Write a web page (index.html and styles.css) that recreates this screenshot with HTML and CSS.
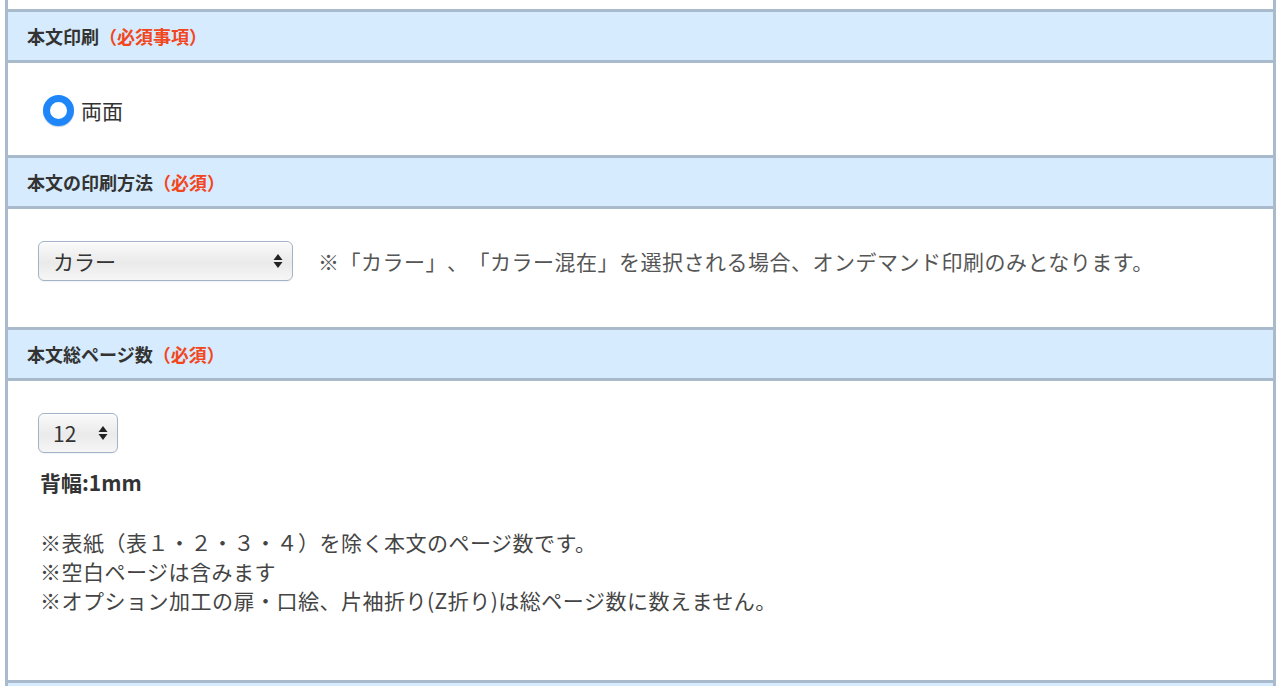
FILE: index.html
```html
<!DOCTYPE html>
<html lang="ja">
<head>
    <meta charset="UTF-8">
    <meta name="viewport" content="width=device-width, initial-scale=1.0">
    <title>本文仕様</title>
    <link rel="stylesheet" href="styles.css">
</head>
<body>
    <div class="order-form">
        <div class="section-body top-rest"></div>

        <div class="section-head">本文印刷<span class="required">（必須事項）</span></div>
        <div class="section-body print-side">
            <label class="radio">
                <input type="radio" name="side" checked>
                <span class="radio-mark"></span>
                <span class="radio-label">両面</span>
            </label>
        </div>

        <div class="section-head">本文の印刷方法<span class="required">（必須）</span></div>
        <div class="section-body print-method">
            <div class="select-wrap wide">
                <select>
                    <option>カラー</option>
                    <option>カラー混在</option>
                    <option>モノクロ</option>
                </select>
                <svg class="select-arrows" width="10" height="16" viewBox="0 0 10 16">
                    <path d="M5 1 L9.5 7 L0.5 7 Z" fill="#222"/>
                    <path d="M5 15 L9.5 9 L0.5 9 Z" fill="#222"/>
                </svg>
            </div>
            <p class="note">※「カラー」、「カラー混在」を選択される場合、オンデマンド印刷のみとなります。</p>
        </div>

        <div class="section-head">本文総ページ数<span class="required">（必須）</span></div>
        <div class="section-body page-count">
            <div class="select-wrap narrow">
                <select>
                    <option>12</option>
                    <option>16</option>
                    <option>20</option>
                </select>
                <svg class="select-arrows" width="10" height="16" viewBox="0 0 10 16">
                    <path d="M5 1 L9.5 7 L0.5 7 Z" fill="#222"/>
                    <path d="M5 15 L9.5 9 L0.5 9 Z" fill="#222"/>
                </svg>
            </div>
            <div class="spine">背幅:1mm</div>
            <ul class="notes">
                <li>※表紙（表１・２・３・４）を除く本文のページ数です。</li>
                <li>※空白ページは含みます</li>
                <li>※オプション加工の扉・口絵、片袖折り(Z折り)は総ページ数に数えません。</li>
            </ul>
        </div>

        <div class="section-head last"></div>
    </div>
</body>
</html>
```

FILE: styles.css
```css
body {
    margin: 0;
    background-color: #fff;
    font-family: 'Noto Sans CJK JP', 'Noto Sans', sans-serif;
    color: #333;
    overflow: hidden;
    text-spacing-trim: space-all;
    font-feature-settings: "chws" 0, "halt" 0, "palt" 0;
}

.order-form {
    height: 686px;
    overflow: hidden;
    margin: 0 4px 0 5px;
    border-left: 3px solid #a9bacd;
    border-right: 3px solid #a9bacd;
}

.section-head {
    height: 48px;
    display: flex;
    align-items: center;
    padding-left: 19px;
    background-color: #d6ebfd;
    border-top: 3px solid #a9bacd;
    border-bottom: 3px solid #a9bacd;
    font-size: 18px;
    font-weight: bold;
    color: #333;
}

.required {
    color: #f2461e;
}

.section-body {
    background-color: #fff;
}

.top-rest {
    height: 9px;
}

/* radio */
.print-side {
    height: 92px;
    display: flex;
    align-items: center;
    padding-left: 35px;
    box-sizing: border-box;
    padding-top: 2px;
}

.radio {
    display: flex;
    align-items: center;
    gap: 7px;
    cursor: pointer;
}

.radio input {
    display: none;
}

.radio-mark {
    width: 17px;
    height: 17px;
    border-radius: 50%;
    border: 7px solid #1f86fa;
    background-color: #fff;
    box-shadow: 0 1px 1px rgba(0, 60, 140, 0.25);
}

.radio-label {
    font-size: 21px;
    color: #333;
}

/* select */
.print-method {
    height: 118px;
    display: flex;
    align-items: center;
    padding-left: 30px;
    box-sizing: border-box;
    padding-bottom: 14px;
    gap: 25px;
}

.select-wrap {
    position: relative;
    display: inline-block;
}

.select-wrap select {
    -webkit-appearance: none;
    appearance: none;
    height: 40px;
    border: 1px solid #a2b3c7;
    border-radius: 6px;
    background: linear-gradient(#fafafa, #eaeaea 55%, #f6f6f6);
    box-shadow: inset 0 1px 0 #fff, 0 1px 1px rgba(0, 0, 0, 0.05);
    font-family: 'Noto Sans CJK JP', 'Noto Sans', sans-serif;
    font-size: 21px;
    color: #333;
    padding: 0 14px;
    outline: none;
}

.select-wrap.wide select {
    width: 255px;
}

.select-wrap.narrow select {
    width: 80px;
}

.select-arrows {
    position: absolute;
    right: 10px;
    top: 12px;
    pointer-events: none;
}

.note {
    margin: 0;
    font-size: 21px;
    letter-spacing: 0.5px;
    color: #555;
}

/* page count */
.page-count {
    height: 299px;
    box-sizing: border-box;
    padding: 32px 0 0 30px;
}

.spine {
    margin-top: 14px;
    margin-left: 2px;
    font-size: 21px;
    font-weight: bold;
    color: #333;
}

.notes {
    list-style: none;
    margin: 31px 0 0 2px;
    padding: 0;
    font-size: 21px;
    line-height: 29px;
    letter-spacing: 0.5px;
    color: #444;
}
```
